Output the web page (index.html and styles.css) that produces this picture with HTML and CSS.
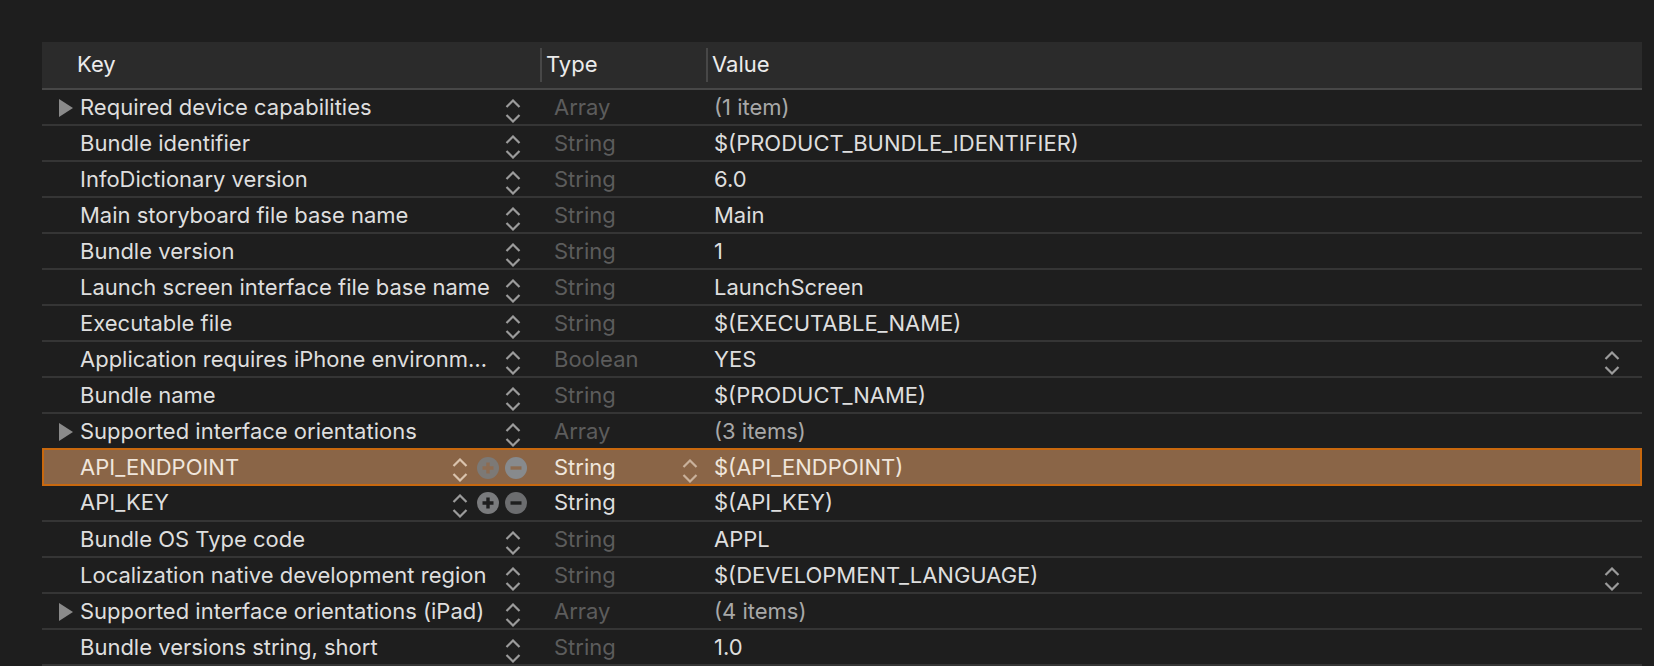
FILE: index.html
```html
<!DOCTYPE html>
<html>
<head>
<meta charset="utf-8">
<link rel="stylesheet" href="styles.css">
</head>
<body>
<div class="plist">
  <div class="head">
    <div class="hcell hkey">Key</div>
    <div class="hcell"><span class="sep"></span><span class="htext">Type</span></div>
    <div class="hcell"><span class="sep"></span><span class="htext">Value</span></div>
  </div>

  <div class="row">
    <div class="key"><span class="tri"><svg width="14" height="18" viewBox="0 0 14 18"><path d="M0 0 L14 9 L0 18 Z" fill="#8a8a8a"/></svg></span><span class="ktext">Required device capabilities</span><svg class="stepper" width="16" height="24" viewBox="0 0 16 24"><path d="M1.5 8 L8 1.5 L14.5 8 M1.5 16 L8 22.5 L14.5 16" fill="none" stroke="#9b9b9b" stroke-width="2.2"/></svg></div>
    <div class="type dim">Array</div>
    <div class="value count">(1 item)</div>
  </div>
  <div class="row">
    <div class="key"><span class="tri"></span><span class="ktext">Bundle identifier</span><svg class="stepper" width="16" height="24" viewBox="0 0 16 24"><path d="M1.5 8 L8 1.5 L14.5 8 M1.5 16 L8 22.5 L14.5 16" fill="none" stroke="#9b9b9b" stroke-width="2.2"/></svg></div>
    <div class="type dim">String</div>
    <div class="value">$(PRODUCT_BUNDLE_IDENTIFIER)</div>
  </div>
  <div class="row">
    <div class="key"><span class="tri"></span><span class="ktext">InfoDictionary version</span><svg class="stepper" width="16" height="24" viewBox="0 0 16 24"><path d="M1.5 8 L8 1.5 L14.5 8 M1.5 16 L8 22.5 L14.5 16" fill="none" stroke="#9b9b9b" stroke-width="2.2"/></svg></div>
    <div class="type dim">String</div>
    <div class="value">6.0</div>
  </div>
  <div class="row">
    <div class="key"><span class="tri"></span><span class="ktext">Main storyboard file base name</span><svg class="stepper" width="16" height="24" viewBox="0 0 16 24"><path d="M1.5 8 L8 1.5 L14.5 8 M1.5 16 L8 22.5 L14.5 16" fill="none" stroke="#9b9b9b" stroke-width="2.2"/></svg></div>
    <div class="type dim">String</div>
    <div class="value">Main</div>
  </div>
  <div class="row">
    <div class="key"><span class="tri"></span><span class="ktext">Bundle version</span><svg class="stepper" width="16" height="24" viewBox="0 0 16 24"><path d="M1.5 8 L8 1.5 L14.5 8 M1.5 16 L8 22.5 L14.5 16" fill="none" stroke="#9b9b9b" stroke-width="2.2"/></svg></div>
    <div class="type dim">String</div>
    <div class="value">1</div>
  </div>
  <div class="row">
    <div class="key"><span class="tri"></span><span class="ktext">Launch screen interface file base name</span><svg class="stepper" width="16" height="24" viewBox="0 0 16 24"><path d="M1.5 8 L8 1.5 L14.5 8 M1.5 16 L8 22.5 L14.5 16" fill="none" stroke="#9b9b9b" stroke-width="2.2"/></svg></div>
    <div class="type dim">String</div>
    <div class="value">LaunchScreen</div>
  </div>
  <div class="row">
    <div class="key"><span class="tri"></span><span class="ktext">Executable file</span><svg class="stepper" width="16" height="24" viewBox="0 0 16 24"><path d="M1.5 8 L8 1.5 L14.5 8 M1.5 16 L8 22.5 L14.5 16" fill="none" stroke="#9b9b9b" stroke-width="2.2"/></svg></div>
    <div class="type dim">String</div>
    <div class="value">$(EXECUTABLE_NAME)</div>
  </div>
  <div class="row">
    <div class="key"><span class="tri"></span><span class="ktext">Application requires iPhone environm…</span><svg class="stepper" width="16" height="24" viewBox="0 0 16 24"><path d="M1.5 8 L8 1.5 L14.5 8 M1.5 16 L8 22.5 L14.5 16" fill="none" stroke="#9b9b9b" stroke-width="2.2"/></svg></div>
    <div class="type dim">Boolean</div>
    <div class="value"><span class="vtext">YES</span><svg class="stepper vstep" width="16" height="24" viewBox="0 0 16 24"><path d="M1.5 8 L8 1.5 L14.5 8 M1.5 16 L8 22.5 L14.5 16" fill="none" stroke="#9b9b9b" stroke-width="2.2"/></svg></div>
  </div>
  <div class="row">
    <div class="key"><span class="tri"></span><span class="ktext">Bundle name</span><svg class="stepper" width="16" height="24" viewBox="0 0 16 24"><path d="M1.5 8 L8 1.5 L14.5 8 M1.5 16 L8 22.5 L14.5 16" fill="none" stroke="#9b9b9b" stroke-width="2.2"/></svg></div>
    <div class="type dim">String</div>
    <div class="value">$(PRODUCT_NAME)</div>
  </div>
  <div class="row">
    <div class="key"><span class="tri"><svg width="14" height="18" viewBox="0 0 14 18"><path d="M0 0 L14 9 L0 18 Z" fill="#8a8a8a"/></svg></span><span class="ktext">Supported interface orientations</span><svg class="stepper" width="16" height="24" viewBox="0 0 16 24"><path d="M1.5 8 L8 1.5 L14.5 8 M1.5 16 L8 22.5 L14.5 16" fill="none" stroke="#9b9b9b" stroke-width="2.2"/></svg></div>
    <div class="type dim">Array</div>
    <div class="value count">(3 items)</div>
  </div>
  <div class="row selected">
    <div class="key"><span class="tri"></span><span class="ktext">API_ENDPOINT</span>
      <span class="tools">
        <svg class="stepper" width="16" height="24" viewBox="0 0 16 24"><path d="M1.5 8 L8 1.5 L14.5 8 M1.5 16 L8 22.5 L14.5 16" fill="none" stroke="#d9c3ad" stroke-width="2.2"/></svg>
        <svg class="btn" width="22" height="22" viewBox="0 0 22 22"><circle cx="11" cy="11" r="11" fill="#7c7976"/><path d="M11 5.5 V16.5 M5.5 11 H16.5" stroke="#8d6c52" stroke-width="3.4"/></svg>
        <svg class="btn" width="22" height="22" viewBox="0 0 22 22"><circle cx="11" cy="11" r="11" fill="#878a8d"/><path d="M5.5 11 H16.5" stroke="#8c6a4f" stroke-width="3.4"/></svg>
      </span>
    </div>
    <div class="type"><span class="ttext">String</span><svg class="stepper tstep" width="16" height="24" viewBox="0 0 16 24"><path d="M1.5 8 L8 1.5 L14.5 8 M1.5 16 L8 22.5 L14.5 16" fill="none" stroke="#c9b19b" stroke-width="2.2"/></svg></div>
    <div class="value">$(API_ENDPOINT)</div>
  </div>
  <div class="row">
    <div class="key"><span class="tri"></span><span class="ktext">API_KEY</span>
      <span class="tools">
        <svg class="stepper" width="16" height="24" viewBox="0 0 16 24"><path d="M1.5 8 L8 1.5 L14.5 8 M1.5 16 L8 22.5 L14.5 16" fill="none" stroke="#9b9b9b" stroke-width="2.2"/></svg>
        <svg class="btn" width="22" height="22" viewBox="0 0 22 22"><circle cx="11" cy="11" r="11" fill="#7a7b7d"/><path d="M11 5.5 V16.5 M5.5 11 H16.5" stroke="#1e1e1e" stroke-width="3.4"/></svg>
        <svg class="btn" width="22" height="22" viewBox="0 0 22 22"><circle cx="11" cy="11" r="11" fill="#6c6d6f"/><path d="M5.5 11 H16.5" stroke="#1e1e1e" stroke-width="3.4"/></svg>
      </span>
    </div>
    <div class="type">String</div>
    <div class="value">$(API_KEY)</div>
  </div>
  <div class="row">
    <div class="key"><span class="tri"></span><span class="ktext">Bundle OS Type code</span><svg class="stepper" width="16" height="24" viewBox="0 0 16 24"><path d="M1.5 8 L8 1.5 L14.5 8 M1.5 16 L8 22.5 L14.5 16" fill="none" stroke="#9b9b9b" stroke-width="2.2"/></svg></div>
    <div class="type dim">String</div>
    <div class="value">APPL</div>
  </div>
  <div class="row">
    <div class="key"><span class="tri"></span><span class="ktext">Localization native development region</span><svg class="stepper" width="16" height="24" viewBox="0 0 16 24"><path d="M1.5 8 L8 1.5 L14.5 8 M1.5 16 L8 22.5 L14.5 16" fill="none" stroke="#9b9b9b" stroke-width="2.2"/></svg></div>
    <div class="type dim">String</div>
    <div class="value"><span class="vtext">$(DEVELOPMENT_LANGUAGE)</span><svg class="stepper vstep" width="16" height="24" viewBox="0 0 16 24"><path d="M1.5 8 L8 1.5 L14.5 8 M1.5 16 L8 22.5 L14.5 16" fill="none" stroke="#9b9b9b" stroke-width="2.2"/></svg></div>
  </div>
  <div class="row">
    <div class="key"><span class="tri"><svg width="14" height="18" viewBox="0 0 14 18"><path d="M0 0 L14 9 L0 18 Z" fill="#8a8a8a"/></svg></span><span class="ktext">Supported interface orientations (iPad)</span><svg class="stepper" width="16" height="24" viewBox="0 0 16 24"><path d="M1.5 8 L8 1.5 L14.5 8 M1.5 16 L8 22.5 L14.5 16" fill="none" stroke="#9b9b9b" stroke-width="2.2"/></svg></div>
    <div class="type dim">Array</div>
    <div class="value count">(4 items)</div>
  </div>
  <div class="row">
    <div class="key"><span class="tri"></span><span class="ktext">Bundle versions string, short</span><svg class="stepper" width="16" height="24" viewBox="0 0 16 24"><path d="M1.5 8 L8 1.5 L14.5 8 M1.5 16 L8 22.5 L14.5 16" fill="none" stroke="#9b9b9b" stroke-width="2.2"/></svg></div>
    <div class="type dim">String</div>
    <div class="value">1.0</div>
  </div>
</div>
</body>
</html>
```

FILE: styles.css
```css
html, body {
  margin: 0;
  padding: 0;
  background: #1e1e1e;
  overflow: hidden;
}
body {
  width: 1654px;
  height: 666px;
  padding: 42px 0 0 42px;
  box-sizing: border-box;
  font-family: "Inter", "Liberation Sans", sans-serif;
  font-size: 22px;
  color: #dedede;
}
.plist {
  width: 1600px;
}
.head {
  display: grid;
  grid-template-columns: 498px 166px 1fr;
  height: 46px;
  background: #2b2b2b;
  border-bottom: 2px solid #474747;
  color: #ececec;
}
.hcell {
  display: flex;
  align-items: center;
  padding-bottom: 2px;
}
.hkey {
  padding-left: 35px;
}
.sep {
  width: 2px;
  height: 34px;
  background: #474747;
  margin-right: 4px;
  margin-top: 2px;
}
.row {
  display: grid;
  grid-template-columns: 498px 166px 1fr;
  height: 34px;
  border-bottom: 2px solid #353535;
}
.row.selected {
  margin-top: -2px;
  border: 2px solid #c8680e;
  background: #8a6547;
  color: #f0e6dc;
  grid-template-columns: 496px 166px 1fr;
}
.key {
  display: flex;
  align-items: center;
  padding-left: 17px;
  padding-right: 19px;
  padding-bottom: 2px;
  min-width: 0;
}
.row .key:has(.tools) {
  padding-right: 13px;
}
.selected .key {
  padding-left: 15px;
}
.tri {
  width: 21px;
  flex: none;
  display: flex;
  align-items: center;
  padding-top: 2px;
}
.tri svg {
  display: block;
}
.ktext {
  flex: 1;
  white-space: nowrap;
  overflow: hidden;
}
.stepper {
  flex: none;
  display: block;
  align-self: flex-start;
  margin-top: 9px;
}
.tools {
  display: flex;
  align-items: center;
  flex: none;
  padding-top: 2px;
}
.tools .btn {
  display: block;
  margin-left: 6px;
}
.tools .btn:nth-of-type(2) {
  margin-left: 9px;
}
.tools .stepper {
  margin-top: 0;
  position: relative;
  top: 3px;
}
.selected .tools .stepper {
  top: 2px;
}
.type {
  display: flex;
  align-items: center;
  padding-left: 14px;
  padding-right: 8px;
  padding-bottom: 2px;
}
.ttext {
  flex: 1;
}
.type.dim {
  color: #5c5c5c;
}
.value {
  display: flex;
  align-items: center;
  padding-left: 8px;
  padding-right: 22px;
  padding-bottom: 2px;
}
.vtext {
  flex: 1;
}
.count {
  color: #a8a8a8;
}
```
